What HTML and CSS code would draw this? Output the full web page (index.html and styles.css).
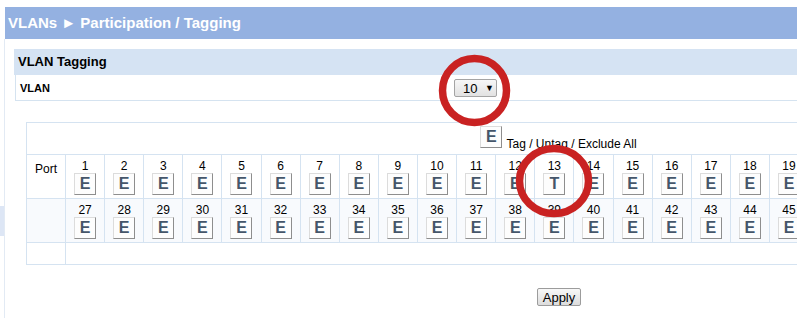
FILE: index.html
```html
<!DOCTYPE html>
<html lang="en">
<head>
    <meta charset="UTF-8">
    <title>VLANs - Participation / Tagging</title>
    <link rel="stylesheet" href="styles.css">
</head>
<body>
    <div class="title-bar">VLANs &#9658; Participation / Tagging</div>

    <div class="layout">
        <div class="side"><div class="side-tab"></div></div>

        <div class="main">
            <div class="panel">
                <div class="panel-title">VLAN Tagging</div>
                <div class="vlan-row">
                    <span class="vlan-label">VLAN</span>
                    <span class="select">10 <span class="arrow">&#9660;</span></span>
                </div>
            </div>

            <div class="port-area">
                <table class="ports">
                    <colgroup>
                        <col class="col-head">
                        <col span="26" class="col-port">
                    </colgroup>
                    <tr>
                        <td colspan="27" class="all-cell"><span class="mode-btn">E</span> Tag / Untag / Exclude All</td>
                    </tr>
                    <tr>
                        <td class="port-head">Port</td>
                        <td class="port"><div class="num">1</div><span class="mode-btn">E</span></td>
                        <td class="port"><div class="num">2</div><span class="mode-btn">E</span></td>
                        <td class="port"><div class="num">3</div><span class="mode-btn">E</span></td>
                        <td class="port"><div class="num">4</div><span class="mode-btn">E</span></td>
                        <td class="port"><div class="num">5</div><span class="mode-btn">E</span></td>
                        <td class="port"><div class="num">6</div><span class="mode-btn">E</span></td>
                        <td class="port"><div class="num">7</div><span class="mode-btn">E</span></td>
                        <td class="port"><div class="num">8</div><span class="mode-btn">E</span></td>
                        <td class="port"><div class="num">9</div><span class="mode-btn">E</span></td>
                        <td class="port"><div class="num">10</div><span class="mode-btn">E</span></td>
                        <td class="port"><div class="num">11</div><span class="mode-btn">E</span></td>
                        <td class="port"><div class="num">12</div><span class="mode-btn">E</span></td>
                        <td class="port"><div class="num">13</div><span class="mode-btn">T</span></td>
                        <td class="port"><div class="num">14</div><span class="mode-btn">E</span></td>
                        <td class="port"><div class="num">15</div><span class="mode-btn">E</span></td>
                        <td class="port"><div class="num">16</div><span class="mode-btn">E</span></td>
                        <td class="port"><div class="num">17</div><span class="mode-btn">E</span></td>
                        <td class="port"><div class="num">18</div><span class="mode-btn">E</span></td>
                        <td class="port"><div class="num">19</div><span class="mode-btn">E</span></td>
                        <td class="port"><div class="num">20</div><span class="mode-btn">E</span></td>
                        <td class="port"><div class="num">21</div><span class="mode-btn">E</span></td>
                        <td class="port"><div class="num">22</div><span class="mode-btn">E</span></td>
                        <td class="port"><div class="num">23</div><span class="mode-btn">E</span></td>
                        <td class="port"><div class="num">24</div><span class="mode-btn">E</span></td>
                        <td class="port"><div class="num">25</div><span class="mode-btn">E</span></td>
                        <td class="port"><div class="num">26</div><span class="mode-btn">E</span></td>
                    </tr>
                    <tr class="alt">
                        <td class="port-head"></td>
                        <td class="port"><div class="num">27</div><span class="mode-btn">E</span></td>
                        <td class="port"><div class="num">28</div><span class="mode-btn">E</span></td>
                        <td class="port"><div class="num">29</div><span class="mode-btn">E</span></td>
                        <td class="port"><div class="num">30</div><span class="mode-btn">E</span></td>
                        <td class="port"><div class="num">31</div><span class="mode-btn">E</span></td>
                        <td class="port"><div class="num">32</div><span class="mode-btn">E</span></td>
                        <td class="port"><div class="num">33</div><span class="mode-btn">E</span></td>
                        <td class="port"><div class="num">34</div><span class="mode-btn">E</span></td>
                        <td class="port"><div class="num">35</div><span class="mode-btn">E</span></td>
                        <td class="port"><div class="num">36</div><span class="mode-btn">E</span></td>
                        <td class="port"><div class="num">37</div><span class="mode-btn">E</span></td>
                        <td class="port"><div class="num">38</div><span class="mode-btn">E</span></td>
                        <td class="port"><div class="num">39</div><span class="mode-btn">E</span></td>
                        <td class="port"><div class="num">40</div><span class="mode-btn">E</span></td>
                        <td class="port"><div class="num">41</div><span class="mode-btn">E</span></td>
                        <td class="port"><div class="num">42</div><span class="mode-btn">E</span></td>
                        <td class="port"><div class="num">43</div><span class="mode-btn">E</span></td>
                        <td class="port"><div class="num">44</div><span class="mode-btn">E</span></td>
                        <td class="port"><div class="num">45</div><span class="mode-btn">E</span></td>
                        <td class="port"><div class="num">46</div><span class="mode-btn">E</span></td>
                        <td class="port"><div class="num">47</div><span class="mode-btn">E</span></td>
                        <td class="port"><div class="num">48</div><span class="mode-btn">E</span></td>
                        <td class="port"><div class="num">49</div><span class="mode-btn">E</span></td>
                        <td class="port"><div class="num">50</div><span class="mode-btn">E</span></td>
                        <td class="port"><div class="num">51</div><span class="mode-btn">E</span></td>
                        <td class="port"><div class="num">52</div><span class="mode-btn">E</span></td>
                    </tr>
                    <tr class="blank">
                        <td></td>
                        <td colspan="26"></td>
                    </tr>
                </table>

                <div class="actions">
                    <button type="button" class="apply">Apply</button>
                </div>
            </div>
        </div>
    </div>

    <!-- red annotation rings drawn over the screenshot -->
    <svg class="marks" width="797" height="318" viewBox="0 0 797 318">
        <ellipse cx="474.5" cy="90.5" rx="32" ry="32" />
        <ellipse cx="554" cy="181" rx="34.5" ry="32.5" />
    </svg>
</body>
</html>
```

FILE: styles.css
```css
body {
    margin: 0;
    padding-top: 7px;
    font-family: "Liberation Sans", Arial, sans-serif;
    font-size: 12px;
    color: #000;
    background-color: #fff;
    overflow: hidden;
}

.title-bar {
    margin-left: 5px;
    height: 32px;
    line-height: 32px;
    padding-left: 3px;
    background-color: #94b1e1;
    color: #fff;
    font-size: 15px;
    font-weight: bold;
    white-space: nowrap;
}

.layout {
    display: flex;
    height: 300px;
}

.side {
    width: 4px;
    flex: none;
}

.side-tab {
    margin-top: 167px;
    height: 30px;
    background-color: #dde6f5;
}

.main {
    flex: 1;
    border-left: 1px solid #e2eaf4;
    padding: 10px 0 0 9px;
    min-width: 1100px;
}

/* VLAN selection panel */
.panel-title {
    height: 26px;
    line-height: 26px;
    padding-left: 4px;
    background-color: #d5e3f3;
    font-size: 13px;
    font-weight: bold;
}

.vlan-row {
    display: flex;
    align-items: center;
    height: 25px;
    margin-left: 1px;
    border-left: 1px solid #d5e3f0;
    border-bottom: 1px solid #d5e3f0;
}

.vlan-label {
    width: 434px;
    padding-left: 4px;
    font-size: 11px;
    font-weight: bold;
}

.select {
    display: inline-block;
    box-sizing: border-box;
    width: 43px;
    height: 18px;
    line-height: 16px;
    padding-left: 8px;
    border: 1px solid #a4a4a4;
    border-radius: 2px;
    background: linear-gradient(#f7f7f7, #e2e2e2);
    font-size: 13px;
}

.select .arrow {
    font-size: 9px;
    margin-left: 4px;
    vertical-align: 2px;
}

/* port grid */
.port-area {
    width: 1066px;
    margin: 21px 0 0 12px;
}

.ports {
    border-collapse: collapse;
    table-layout: fixed;
    width: 1057px;
}

.col-head {
    width: 39px;
}

.ports td {
    border: 1px solid #d5e3f1;
    padding: 0;
}

.all-cell {
    height: 31px;
    box-sizing: border-box;
    padding: 3px 0 3px 8px !important;
    text-align: center;
    vertical-align: top;
    line-height: 14px;
}

.all-cell .mode-btn {
    display: inline-block;
    overflow: hidden;
    vertical-align: baseline;
    margin-right: 1px;
}

.port-head {
    text-align: center;
    vertical-align: top;
    padding-top: 7px !important;
    line-height: 14px;
}

.port {
    height: 43px;
    box-sizing: border-box;
    padding: 4px 0 3px 0 !important;
    text-align: center;
    vertical-align: top;
}

.alt td {
    background-color: #f8fafd;
}

.num {
    line-height: 14px;
    height: 14px;
}

.mode-btn {
    display: block;
    box-sizing: border-box;
    width: 22px;
    height: 22px;
    margin: 0 auto;
    border: 1px solid;
    border-color: #dcdcdc #8e8e8e #8e8e8e #dcdcdc;
    background-color: #fdfdfd;
    color: #45566a;
    font-size: 16px;
    font-weight: bold;
    line-height: 20px;
    text-align: center;
}

.blank td {
    height: 21px;
}

.actions {
    margin-top: 23px;
    text-align: center;
}

.apply {
    height: 18px;
    padding: 0 5px;
    border: 1px solid #9c9c9c;
    border-radius: 2px;
    background: linear-gradient(#f8f8f8, #dcdcdc);
    font-family: "Liberation Sans", Arial, sans-serif;
    font-size: 13px;
    line-height: 15px;
    color: #000;
}

.marks {
    position: absolute;
    left: 0;
    top: 0;
    pointer-events: none;
}

.marks ellipse {
    fill: none;
    stroke: #c92222;
    stroke-width: 7.5;
}
```
